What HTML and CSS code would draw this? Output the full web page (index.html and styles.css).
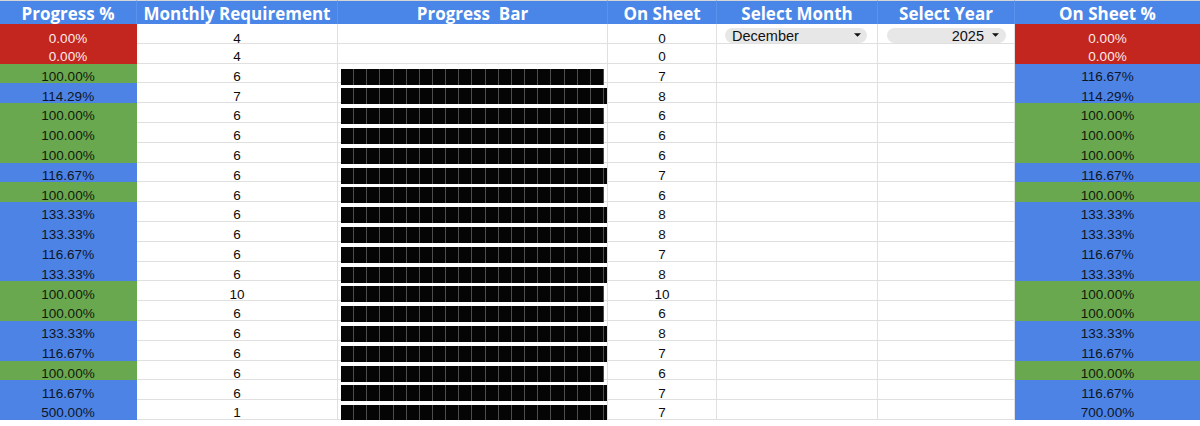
FILE: index.html
```html
<!DOCTYPE html>
<html>
<head>
<meta charset="utf-8">
<link rel="stylesheet" href="styles.css">
</head>
<body>
<div class="sheet">
  <div class="h">Progress %</div>
  <div class="h">Monthly Requirement</div>
  <div class="h">Progress&nbsp; Bar</div>
  <div class="h">On Sheet</div>
  <div class="h">Select Month</div>
  <div class="h">Select Year</div>
  <div class="h last">On Sheet %</div>

  <div class="c red first"><span>0.00%</span></div><div class="c first"><span>4</span></div><div class="c bar"></div><div class="c first"><span>0</span></div>
  <div class="c dd"><div class="chip month"><span>December</span><svg class="arr" viewBox="0 0 8 4" width="7" height="4"><path d="M0 0H8L4 4Z"/></svg></div></div>
  <div class="c dd"><div class="chip year"><span>2025</span><svg class="arr" viewBox="0 0 8 4" width="7" height="4"><path d="M0 0H8L4 4Z"/></svg></div></div>
  <div class="c red last first"><span>0.00%</span></div>

  <div class="c red"><span>0.00%</span></div><div class="c"><span>4</span></div><div class="c bar"></div><div class="c"><span>0</span></div><div class="c"></div><div class="c"></div><div class="c red last"><span>0.00%</span></div>

  <div class="c green"><span>100.00%</span></div><div class="c"><span>6</span></div><div class="c bar"><div class="blocks" style="--p:100"></div></div><div class="c"><span>7</span></div><div class="c"></div><div class="c"></div><div class="c blue last"><span>116.67%</span></div>

  <div class="c blue"><span>114.29%</span></div><div class="c"><span>7</span></div><div class="c bar"><div class="blocks" style="--p:114.29"></div></div><div class="c"><span>8</span></div><div class="c"></div><div class="c"></div><div class="c blue last"><span>114.29%</span></div>

  <div class="c green"><span>100.00%</span></div><div class="c"><span>6</span></div><div class="c bar"><div class="blocks" style="--p:100"></div></div><div class="c"><span>6</span></div><div class="c"></div><div class="c"></div><div class="c green last"><span>100.00%</span></div>

  <div class="c green"><span>100.00%</span></div><div class="c"><span>6</span></div><div class="c bar"><div class="blocks" style="--p:100"></div></div><div class="c"><span>6</span></div><div class="c"></div><div class="c"></div><div class="c green last"><span>100.00%</span></div>

  <div class="c green"><span>100.00%</span></div><div class="c"><span>6</span></div><div class="c bar"><div class="blocks" style="--p:100"></div></div><div class="c"><span>6</span></div><div class="c"></div><div class="c"></div><div class="c green last"><span>100.00%</span></div>

  <div class="c blue"><span>116.67%</span></div><div class="c"><span>6</span></div><div class="c bar"><div class="blocks" style="--p:116.67"></div></div><div class="c"><span>7</span></div><div class="c"></div><div class="c"></div><div class="c blue last"><span>116.67%</span></div>

  <div class="c green"><span>100.00%</span></div><div class="c"><span>6</span></div><div class="c bar"><div class="blocks" style="--p:100"></div></div><div class="c"><span>6</span></div><div class="c"></div><div class="c"></div><div class="c green last"><span>100.00%</span></div>

  <div class="c blue"><span>133.33%</span></div><div class="c"><span>6</span></div><div class="c bar"><div class="blocks" style="--p:133.33"></div></div><div class="c"><span>8</span></div><div class="c"></div><div class="c"></div><div class="c blue last"><span>133.33%</span></div>

  <div class="c blue"><span>133.33%</span></div><div class="c"><span>6</span></div><div class="c bar"><div class="blocks" style="--p:133.33"></div></div><div class="c"><span>8</span></div><div class="c"></div><div class="c"></div><div class="c blue last"><span>133.33%</span></div>

  <div class="c blue"><span>116.67%</span></div><div class="c"><span>6</span></div><div class="c bar"><div class="blocks" style="--p:116.67"></div></div><div class="c"><span>7</span></div><div class="c"></div><div class="c"></div><div class="c blue last"><span>116.67%</span></div>

  <div class="c blue"><span>133.33%</span></div><div class="c"><span>6</span></div><div class="c bar"><div class="blocks" style="--p:133.33"></div></div><div class="c"><span>8</span></div><div class="c"></div><div class="c"></div><div class="c blue last"><span>133.33%</span></div>

  <div class="c green"><span>100.00%</span></div><div class="c"><span>10</span></div><div class="c bar"><div class="blocks" style="--p:100"></div></div><div class="c"><span>10</span></div><div class="c"></div><div class="c"></div><div class="c green last"><span>100.00%</span></div>

  <div class="c green"><span>100.00%</span></div><div class="c"><span>6</span></div><div class="c bar"><div class="blocks" style="--p:100"></div></div><div class="c"><span>6</span></div><div class="c"></div><div class="c"></div><div class="c green last"><span>100.00%</span></div>

  <div class="c blue"><span>133.33%</span></div><div class="c"><span>6</span></div><div class="c bar"><div class="blocks" style="--p:133.33"></div></div><div class="c"><span>8</span></div><div class="c"></div><div class="c"></div><div class="c blue last"><span>133.33%</span></div>

  <div class="c blue"><span>116.67%</span></div><div class="c"><span>6</span></div><div class="c bar"><div class="blocks" style="--p:116.67"></div></div><div class="c"><span>7</span></div><div class="c"></div><div class="c"></div><div class="c blue last"><span>116.67%</span></div>

  <div class="c green"><span>100.00%</span></div><div class="c"><span>6</span></div><div class="c bar"><div class="blocks" style="--p:100"></div></div><div class="c"><span>6</span></div><div class="c"></div><div class="c"></div><div class="c green last"><span>100.00%</span></div>

  <div class="c blue"><span>116.67%</span></div><div class="c"><span>6</span></div><div class="c bar"><div class="blocks" style="--p:116.67"></div></div><div class="c"><span>7</span></div><div class="c"></div><div class="c"></div><div class="c blue last"><span>116.67%</span></div>

  <div class="c blue"><span>500.00%</span></div><div class="c"><span>1</span></div><div class="c bar"><div class="blocks" style="--p:500"></div></div><div class="c"><span>7</span></div><div class="c"></div><div class="c"></div><div class="c blue last"><span>700.00%</span></div>
</div>
</body>
</html>
```

FILE: styles.css
```css
html, body {
  margin: 0;
  padding: 0;
  background: #ffffff;
  overflow: hidden;
}

.sheet {
  display: grid;
  grid-template-columns: 137px 201px 270px 109px 161px 137px 185px;
  grid-template-rows: 24px repeat(20, 19.8px);
  width: 1200px;
  font-family: "Liberation Sans", Arial, sans-serif;
}

.h {
  box-sizing: border-box;
  background: #4a86e8;
  color: #ffffff;
  border-top: 1px solid #d6d6d6;
  border-right: 1px solid #5d92ea;
  font-family: "Open Sans", "Liberation Sans", sans-serif;
  font-weight: 700;
  font-size: 17px;
  line-height: 17px;
  display: flex;
  align-items: flex-end;
  justify-content: center;
  padding-bottom: 2px;
  white-space: nowrap;
}

.c {
  box-sizing: border-box;
  border-right: 1px solid #e0e0e0;
  border-bottom: 1px solid #e0e0e0;
  display: flex;
  align-items: flex-end;
  justify-content: center;
  font-size: 13.5px;
  color: #0d0d0d;
  white-space: nowrap;
}

.c > span {
  line-height: 13.5px;
  margin-bottom: -1px;
}

.c.first > span {
  margin-bottom: -3px;
}

.last {
  border-right: none;
}

.red {
  background: #c2261e;
  border-color: transparent;
  color: #fdeceb;
}

.green {
  background: #6aa84f;
  border-color: transparent;
  color: #101a0c;
}

.blue {
  background: #4e83e6;
  border-color: transparent;
  color: #0c1626;
}

.bar {
  justify-content: flex-start;
  align-items: flex-start;
  padding-left: 3px;
  padding-top: 5px;
  overflow-x: clip;
  overflow-y: visible;
}

.blocks {
  flex: none;
  height: 16px;
  width: calc(var(--p) * 2.63px);
  background: repeating-linear-gradient(90deg, #050505 0, #050505 12.15px, #4d4d4d 12.15px, #4d4d4d 13.15px);
}

.dd {
  align-items: flex-end;
  justify-content: stretch;
}

.chip {
  flex: 1;
  box-sizing: border-box;
  height: 15px;
  border-radius: 8px;
  background: #e7e7e8;
  display: flex;
  align-items: center;
  font-size: 14.5px;
  color: #111111;
}

.chip span {
  line-height: 14px;
  margin-top: 1px;
}

.month {
  margin-left: 8px;
  margin-right: 10px;
  padding-left: 7px;
  padding-right: 6px;
  justify-content: space-between;
}

.year {
  margin-left: 9px;
  margin-right: 8px;
  padding-right: 7px;
  justify-content: flex-end;
  gap: 8px;
}

.arr {
  fill: #111111;
  flex: none;
}
```
